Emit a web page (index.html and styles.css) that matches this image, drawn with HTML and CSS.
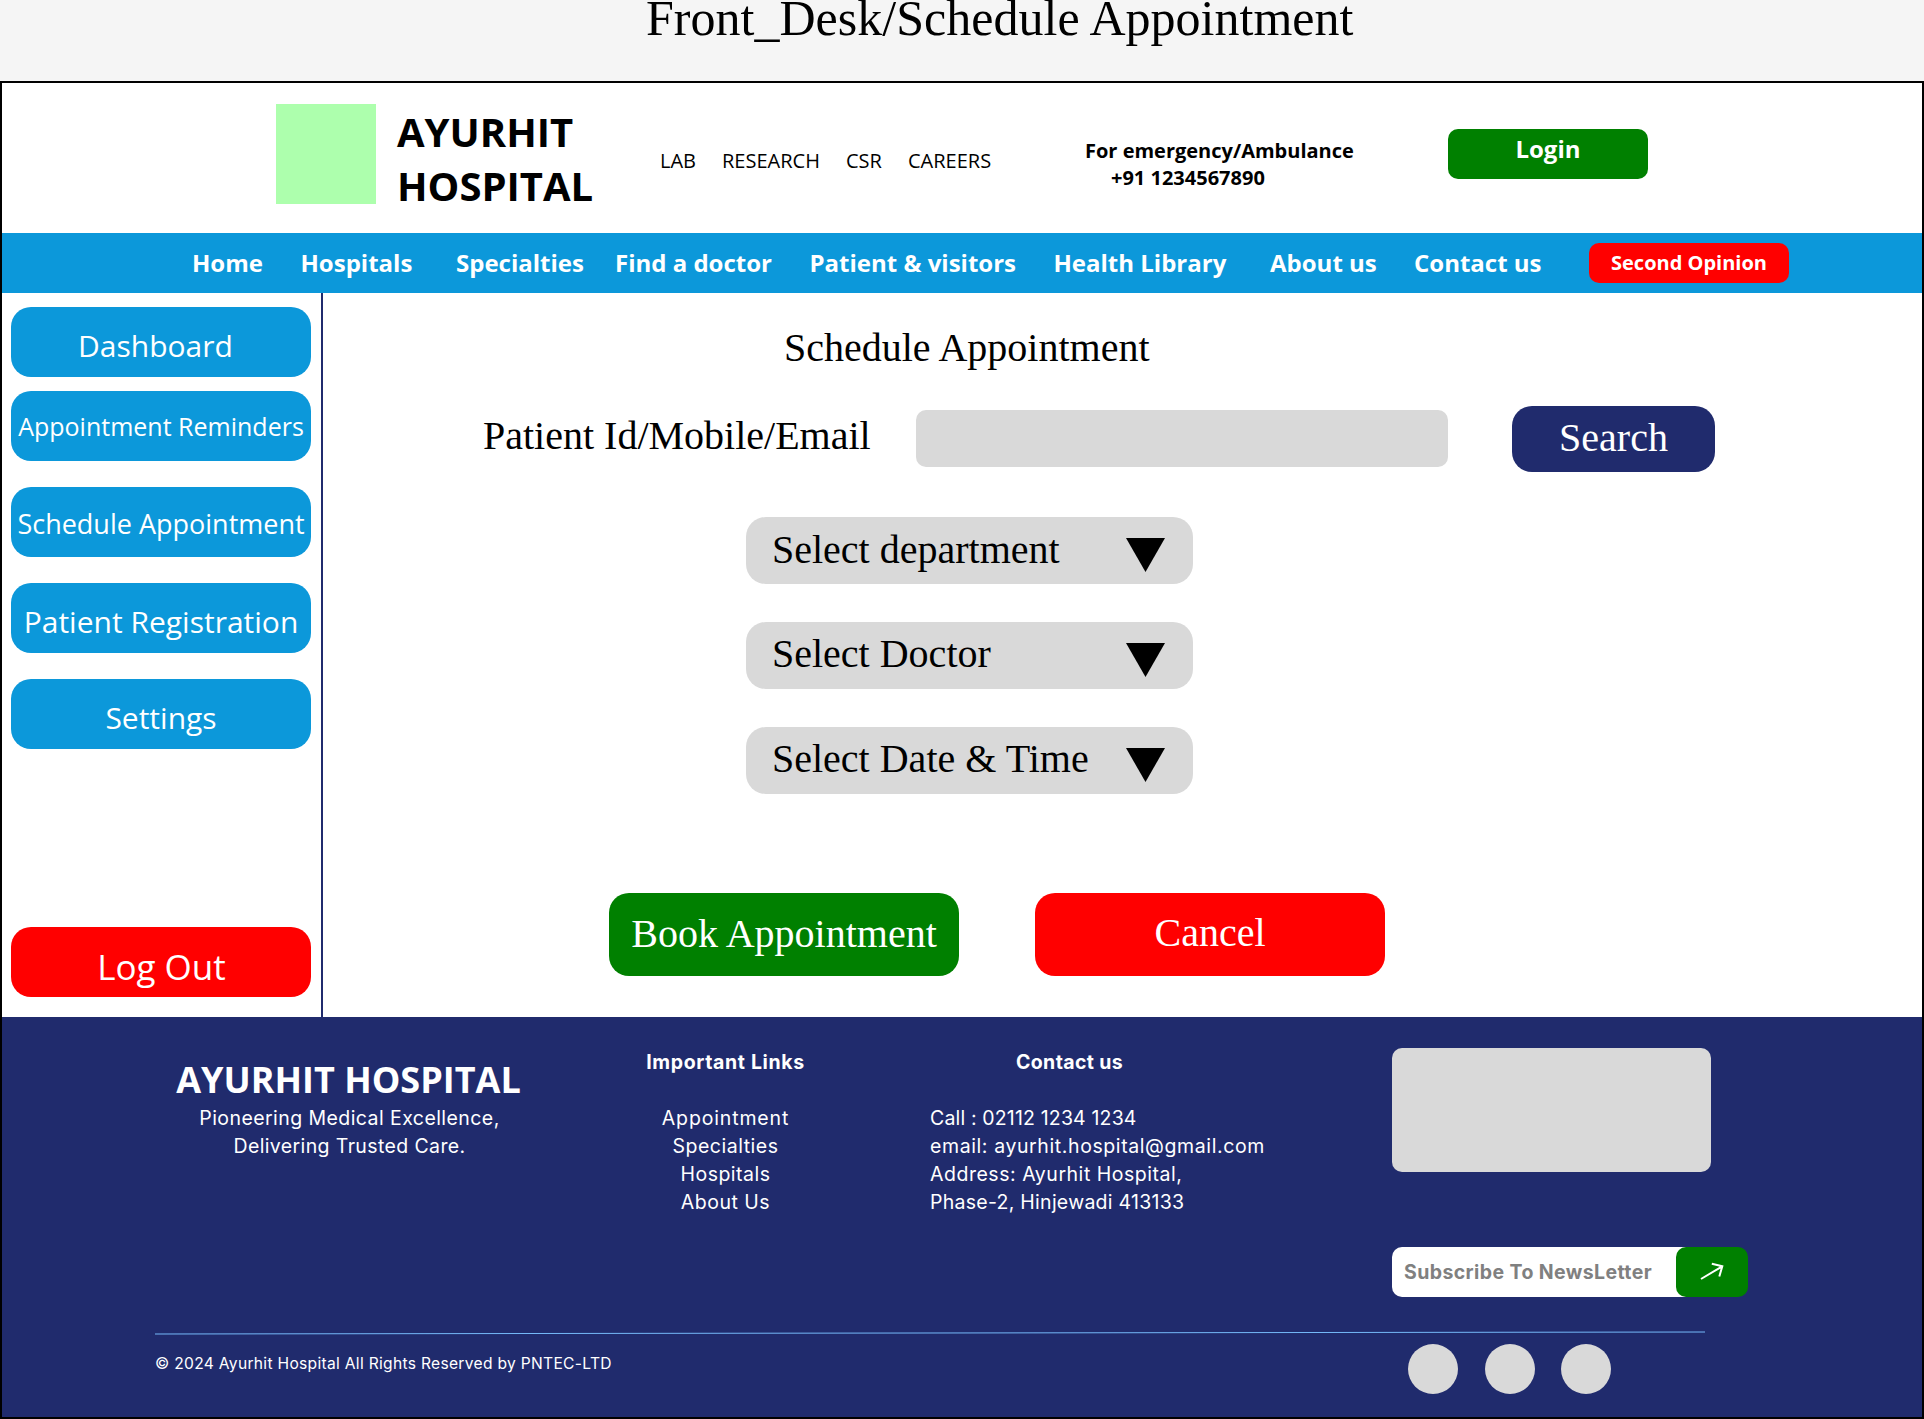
FILE: index.html
```html
<!DOCTYPE html>
<html lang="en">
<head>
<meta charset="utf-8">
<title>Front_Desk/Schedule Appointment</title>
<link rel="stylesheet" href="styles.css">
</head>
<body>
<h1 class="page-title">Front_Desk/Schedule Appointment</h1>
<div class="frame">
  <header class="header">
    <div class="logo"></div>
    <div class="brand">AYURHIT<br>HOSPITAL</div>
    <nav class="top-links"><a>LAB</a><a>RESEARCH</a><a>CSR</a><a>CAREERS</a></nav>
    <div class="emergency"><div>For emergency/Ambulance</div><div class="phone">+91 1234567890</div></div>
    <button class="login">Login</button>
  </header>
  <nav class="nav">
    <a>Home</a><a>Hospitals</a><a>Specialties</a><a>Find a doctor</a><a>Patient &amp; visitors</a><a>Health Library</a><a>About us</a><a>Contact us</a>
    <button class="second">Second Opinion</button>
  </nav>
  <div class="body">
    <aside class="sidebar">
      <button class="side-btn dashboard">Dashboard</button>
      <button class="side-btn reminders">Appointment Reminders</button>
      <button class="side-btn schedule">Schedule Appointment</button>
      <button class="side-btn">Patient Registration</button>
      <button class="side-btn">Settings</button>
      <button class="side-btn logout">Log Out</button>
    </aside>
    <main class="main">
      <h2 class="heading">Schedule Appointment</h2>
      <div class="lookup">
        <label class="lookup-label" for="patient">Patient Id/Mobile/Email</label>
        <input class="lookup-input" id="patient" type="text">
        <button class="search">Search</button>
      </div>
      <div class="selects">
        <div class="select department"><span>Select department</span><svg class="caret" viewBox="0 0 39 34"><path d="M0 0H39L19.5 34Z"/></svg></div>
        <div class="select"><span>Select Doctor</span><svg class="caret" viewBox="0 0 39 34"><path d="M0 0H39L19.5 34Z"/></svg></div>
        <div class="select"><span>Select Date &amp; Time</span><svg class="caret" viewBox="0 0 39 34"><path d="M0 0H39L19.5 34Z"/></svg></div>
      </div>
      <div class="actions">
        <button class="action book">Book Appointment</button>
        <button class="action cancel">Cancel</button>
      </div>
    </main>
  </div>
  <footer class="footer">
    <div class="footer-top">
      <section class="about">
        <h3 class="about-title">AYURHIT HOSPITAL</h3>
        <p class="t-pioneering">Pioneering Medical Excellence,</p>
        <p class="t-delivering">Delivering Trusted Care.</p>
      </section>
      <section class="links">
        <h4 class="t-important">Important Links</h4>
        <p class="t-appointment">Appointment</p>
        <p>Specialties</p>
        <p>Hospitals</p>
        <p>About Us</p>
      </section>
      <section class="contact">
        <h4 class="t-contact">Contact us</h4>
        <p class="t-call">Call : 02112 1234 1234</p>
        <p class="t-email">email: ayurhit.hospital@gmail.com</p>
        <p class="t-address">Address: Ayurhit Hospital,</p>
        <p class="t-phase">Phase-2, Hinjewadi 413133</p>
      </section>
      <section class="extra">
        <div class="map"></div>
        <div class="subscribe">
          <span class="subscribe-text">Subscribe To NewsLetter</span>
          <button class="send"><svg class="arrow" viewBox="0 0 26 20"><path d="M3 17L24.3 4.3M13.8 1.8L24.3 4.3L21.3 14.5"/></svg></button>
        </div>
      </section>
    </div>
    <svg class="rule" viewBox="0 0 1550 4"><path d="M0 3L1550 1"/></svg>
    <div class="footer-bottom">
      <p class="copyright">© 2024 Ayurhit Hospital All Rights Reserved by PNTEC-LTD</p>
      <div class="socials"><i></i><i></i><i></i></div>
    </div>
  </footer>
</div>
</body>
</html>
```
FILE: styles.css
```css
* { box-sizing: border-box; margin: 0; padding: 0; }
body { width: 1924px; height: 1419px; overflow: hidden; background: #f5f5f5; color: #000; font-family: "Open Sans", sans-serif; white-space: nowrap; }
button { display: block; border: 0; font-family: inherit; color: #fff; white-space: nowrap; line-height: 1; }
.page-title { height: 81px; padding-left: 646px; font: 400 50px/37px "Liberation Serif", serif; letter-spacing: 0.02px; }
.frame { height: 1338px; border: 2px solid #000; background: #fff; display: flex; flex-direction: column; }

.header { height: 150px; padding: 21px 0 0 274px; display: grid; grid-template-columns: 121px 263px 425px 363px 200px; align-items: start; }
.logo { width: 100px; height: 100px; background: #adffad; }
.brand { margin-top: 1px; font-size: 40px; font-weight: 700; line-height: 54px; }
.top-links { display: grid; grid-template-columns: 62px 124px 62px auto; margin-top: 43px; font-size: 20px; line-height: 27px; }
.emergency { margin-top: 33px; font-size: 20px; font-weight: 700; line-height: 27px; }
.phone { padding-left: 26px; }
.login { height: 50px; margin-top: 25px; padding-bottom: 10px; border-radius: 10px; background: green; font-size: 24px; font-weight: 700; }

.nav { height: 60px; padding-left: 190px; display: grid; grid-template-columns: 108.5px 155.5px 159px 194.5px 244px 216.5px 144px 175px 200px; align-items: center; background: #0c98da; color: #fff; font-size: 24px; font-weight: 700; line-height: 60px; }
.second { height: 40px; border-radius: 10px; background: red; font-size: 20px; font-weight: 700; }

.body { height: 724px; display: flex; }
.sidebar { width: 321px; padding: 14px 0 0 9px; border-right: 2px solid #202b6d; display: flex; flex-direction: column; gap: 26px; }
.side-btn { width: 300px; height: 70px; padding: 24px 0 16px; border-radius: 20px; background: #0c98da; font-size: 30px; }
.dashboard { padding-right: 11px; margin-bottom: -12px; }
.reminders { font-size: 25px; padding: 23px 0 22px; }
.schedule { font-size: 27px; padding: 23px 0 20px; }
.logout { margin-top: 152px; padding: 22px 0 13px 1px; background: red; font-size: 35px; }

.main { flex: 1; padding-top: 35px; font-family: "Liberation Serif", serif; font-size: 40px; line-height: 40px; }
.heading { padding-left: 461px; font-size: 40px; font-weight: 400; }
.lookup { display: grid; grid-template-columns: 433px 596px 203px; margin: 38px 0 0 160px; align-items: start; }
.lookup-label { margin-top: 10px; }
.lookup-input { width: 532px; height: 57px; margin-top: 4px; border: 0; border-radius: 10px; background: #d9d9d9; }
.search { height: 66px; padding: 12px 0 14px; border-radius: 20px; background: #202b6d; font-size: 40px; }
.selects { display: flex; flex-direction: column; gap: 38px; margin: 45px 0 0 423px; }
.select { width: 447px; height: 67px; padding: 12px 28px 0 26px; border-radius: 20px; background: #d9d9d9; display: flex; justify-content: space-between; align-items: flex-start; }
.department span { margin-top: 1px; }
.caret { width: 39px; height: 34px; margin-top: 9px; }
.actions { display: flex; gap: 76px; margin: 99px 0 0 286px; }
.action { width: 350px; height: 83px; padding: 21px 0 22px; border-radius: 20px; font-size: 40px; }
.book { background: green; }
.cancel { padding: 20px 0 23px; background: red; }

.footer { flex: 1; background: #202b6d; color: #fff; font-family: Inter, sans-serif; font-size: 19.5px; line-height: 28px; }
.footer-top { height: 314px; padding-left: 154px; display: grid; grid-template-columns: 385px 371px 462px 356px; }
.about, .links { text-align: center; }
.about { padding-top: 47px; }
.about-title { font: 700 36px/32px "Open Sans", sans-serif; margin-bottom: 8px; }
.links, .contact { padding-top: 31px; }
.links { padding-right: 2px; letter-spacing: 0.5px; }
h4 { font-size: 19.5px; font-weight: 700; margin-bottom: 28px; }
.contact { padding-left: 18px; }
.t-pioneering { padding-left: 2px; letter-spacing: 0.43px; }
.t-delivering { padding-left: 2px; letter-spacing: 0.38px; }
.t-important { letter-spacing: 0.65px; }
.t-appointment { letter-spacing: 0.85px; }
.t-contact { padding-left: 86px; letter-spacing: 0.37px; }
.t-call { letter-spacing: 0.16px; }
.t-email { letter-spacing: 0.6px; }
.t-address { letter-spacing: 0.53px; }
.t-phase { letter-spacing: 0.27px; }
.extra { padding-top: 31px; padding-left: 18px; }
.map { width: 319px; height: 124px; border-radius: 10px; background: #d9d9d9; }
.subscribe { display: flex; width: 356px; height: 50px; margin-top: 75px; }
.subscribe-text { width: 294px; padding-left: 12px; border-radius: 10px 0 0 10px; background: #fff; line-height: 50px; font-weight: 700; color: #808080; letter-spacing: 0.4px; }
.send { width: 72px; height: 50px; margin-left: -10px; border-radius: 10px; background: green; }
.arrow { display: block; width: 26px; height: 20px; margin-left: 22px; fill: none; stroke: #fff; stroke-width: 2; }
.rule { display: block; width: 1550px; height: 4px; margin-left: 153px; stroke: #75b9f9; stroke-width: 1; }
.footer-bottom { display: flex; padding-left: 153px; }
.copyright { width: 1253px; padding-top: 15px; font-size: 15.6px; letter-spacing: 0.3px; }
.socials { display: flex; gap: 26.5px; padding-top: 9px; }
.socials i { width: 50px; height: 50px; border-radius: 50%; background: #d9d9d9; }
```
